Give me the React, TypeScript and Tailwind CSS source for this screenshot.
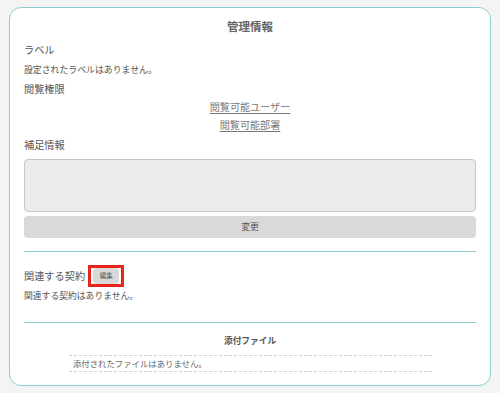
import React from "react";

export default function App() {
  const font = { fontFamily: '"Noto Sans CJK JP", "Noto Sans", sans-serif' };
  return (
    <div
      className="w-[500px] h-[393px] bg-[#f4f4f4] pt-[7px] px-[9px] overflow-hidden"
      style={font}
    >
      <div className="h-[379px] bg-white border border-[#8ccfcf] rounded-[12px] px-[14px] flex flex-col">
        <div className="mt-[9px] h-[20px] flex items-center justify-center text-[11.5px] font-bold text-[#666]">
          管理情報
        </div>
        <div className="mt-[5px] h-[16px] flex items-center text-[10.2px] text-[#555]">ラベル</div>
        <div className="mt-[5px] h-[14px] flex items-center text-[8.9px] text-[#555]">
          設定されたラベルはありません。
        </div>
        <div className="mt-[4px] h-[16px] flex items-center text-[10.2px] text-[#555]">閲覧権限</div>
        <div className="mt-[2px] h-[16px] flex items-center justify-center text-[10.1px] text-[#777]">
          <span className="underline underline-offset-2">閲覧可能ユーザー</span>
        </div>
        <div className="mt-[2px] h-[16px] flex items-center justify-center text-[10.1px] text-[#777]">
          <span className="underline underline-offset-2">閲覧可能部署</span>
        </div>
        <div className="mt-[4px] h-[16px] flex items-center text-[10.2px] text-[#555]">補足情報</div>
        <div className="mt-[6px] h-[53px] bg-[#ececec] border border-[#c6c6c6] rounded-[4px]" />
        <div className="mt-[4px] h-[22px] bg-[#d9d9d9] rounded-[4px] flex items-center justify-center text-[8.8px] text-[#555]">
          変更
        </div>
        <div className="mt-[13px] h-px bg-[#8ccfcf]" />
        <div className="mt-[14px] h-[20px] flex items-center text-[10.2px] text-[#555]">
          <span>関連する契約</span>
          <div className="ml-[3px] border-[3px] border-[#e8231a] px-[2px]">
            <div className="h-[16px] w-[26px] bg-[#d9d9d9] rounded-[4px] flex items-center justify-center text-[6.5px] text-[#555]">
              編集
            </div>
          </div>
        </div>
        <div className="mt-[3px] h-[14px] flex items-center text-[8.8px] text-[#555]">
          関連する契約はありません。
        </div>
        <div className="mt-[19px] h-px bg-[#8ccfcf]" />
        <div className="mt-[11px] h-[14px] flex items-center justify-center text-[8.7px] font-bold text-[#555]">
          添付ファイル
        </div>
        <div className="mt-[7px] ml-[45px] w-[363px] border-y border-dashed border-[#d0d0d0]">
          <div className="h-[15px] flex items-center pl-[4px] text-[8.4px] text-[#666]">
            添付されたファイルはありません。
          </div>
        </div>
      </div>
    </div>
  );
}
